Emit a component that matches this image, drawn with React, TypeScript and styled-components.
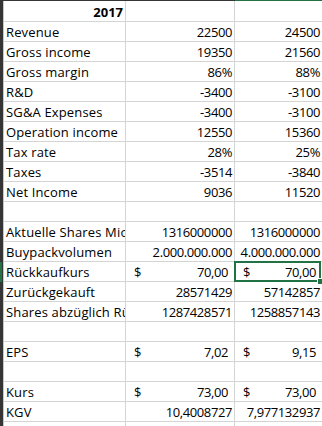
import React from 'react';
import styled, { createGlobalStyle } from 'styled-components';

const colors = {
  grid: '#d4d4d4',
  header: '#353535',
  headerEdge: '#c6c6c6',
  accent: '#217346',
  text: '#000000',
};

const GlobalStyle = createGlobalStyle`
  html, body {
    margin: 0;
    background: #ffffff;
    overflow: hidden;
  }
  body {
    font-family: "Open Sans", "Liberation Sans", sans-serif;
    font-size: 13px;
    color: ${colors.text};
  }
`;

const COLS = '4px 122px 109px 88px';

const Sheet = styled.div`
  width: 322px;
  height: 426px;
  overflow: hidden;
`;

const HeaderEdge = styled.div`
  display: grid;
  grid-template-columns: ${COLS};
  height: 1px;
`;

const EdgePart = styled.div<{ $active?: boolean }>`
  background: ${(p) => (p.$active ? colors.accent : colors.header)};
`;

const Row = styled.div<{ $tall?: boolean }>`
  display: grid;
  grid-template-columns: ${COLS};
  height: ${(p) => (p.$tall ? 21 : 20)}px;
`;

const RowHead = styled.div<{ $active?: boolean }>`
  box-sizing: border-box;
  background: ${(p) =>
    p.$active
      ? `linear-gradient(to right, ${colors.accent} 0 2px, ${colors.header} 2px)`
      : colors.header};
  border-right: 1px solid ${colors.headerEdge};
`;

const Cell = styled.div<{ $align?: 'left' | 'right'; $bold?: boolean; $selected?: boolean }>`
  position: relative;
  box-sizing: border-box;
  display: flex;
  align-items: flex-end;
  justify-content: ${(p) => (p.$align === 'right' ? 'flex-end' : 'flex-start')};
  padding: 0 2px 1px 2px;
  border-right: 1px solid ${colors.grid};
  border-bottom: 1px solid ${colors.grid};
  overflow: ${(p) => (p.$selected ? 'visible' : 'hidden')};
  white-space: nowrap;
  line-height: 16px;
  font-weight: ${(p) => (p.$bold ? 700 : 400)};
`;

const Label = styled.span`
  letter-spacing: 0.15px;
`;

const Num = styled.span`
  letter-spacing: -0.4px;
`;

const Money = styled.div`
  flex: 1;
  display: flex;
  justify-content: space-between;
  padding: 0 4px 0 6px;
  letter-spacing: -0.4px;
`;

const Selection = styled.div`
  position: absolute;
  left: -1px;
  top: -1px;
  right: 1px;
  bottom: -1px;
  border: 2px solid ${colors.accent};
  z-index: 1;

  &::after {
    content: '';
    position: absolute;
    right: -4px;
    bottom: -4px;
    width: 5px;
    height: 5px;
    background: ${colors.accent};
    box-shadow: 0 0 0 1px #ffffff;
  }
`;

type Value = string | { money: string };

type Line = {
  label: string;
  b?: Value;
  c?: Value;
};

const lines: Line[] = [
  { label: 'Revenue', b: '22500', c: '24500' },
  { label: 'Gross income', b: '19350', c: '21560' },
  { label: 'Gross margin', b: '86%', c: '88%' },
  { label: 'R&D', b: '-3400', c: '-3100' },
  { label: 'SG&A Expenses', b: '-3400', c: '-3100' },
  { label: 'Operation income', b: '12550', c: '15360' },
  { label: 'Tax rate', b: '28%', c: '25%' },
  { label: 'Taxes', b: '-3514', c: '-3840' },
  { label: 'Net Income', b: '9036', c: '11520' },
  { label: '' },
  { label: 'Aktuelle Shares Mio', b: '1316000000', c: '1316000000' },
  { label: 'Buypackvolumen', b: '2.000.000.000', c: '4.000.000.000' },
  { label: 'Rückkaufkurs', b: { money: '70,00' }, c: { money: '70,00' } },
  { label: 'Zurückgekauft', b: '28571429', c: '57142857' },
  { label: 'Shares abzüglich Rückkauf', b: '1287428571', c: '1258857143' },
  { label: '' },
  { label: 'EPS', b: { money: '7,02' }, c: { money: '9,15' } },
  { label: '' },
  { label: 'Kurs', b: { money: '73,00' }, c: { money: '73,00' } },
  { label: 'KGV', b: '10,4008727', c: '7,977132937' },
  { label: '' },
];

// the active cell sits in column C of the "Rückkaufkurs" row
const ACTIVE_ROW = 12;

const ValueCell = ({ value, selected }: { value?: Value; selected?: boolean }) => {
  if (value && typeof value === 'object') {
    return (
      <Cell $selected={selected}>
        <Money>
          <span>$</span>
          <span>{value.money}</span>
        </Money>
        {selected && <Selection />}
      </Cell>
    );
  }
  return (
    <Cell $align="right" $selected={selected}>
      {value && <Num>{value}</Num>}
      {selected && <Selection />}
    </Cell>
  );
};

const App = () => {
  return (
    <>
      <GlobalStyle />
      <Sheet>
        <HeaderEdge>
          <EdgePart />
          <EdgePart />
          <EdgePart />
          <EdgePart $active />
        </HeaderEdge>

        <Row $tall>
          <RowHead />
          <Cell $align="right" $bold>
            2017
          </Cell>
          <Cell />
          <Cell />
        </Row>

        {lines.map((line, i) => (
          <Row key={i}>
            <RowHead $active={i === ACTIVE_ROW} />
            <Cell>{line.label && <Label>{line.label}</Label>}</Cell>
            <ValueCell value={line.b} />
            <ValueCell value={line.c} selected={i === ACTIVE_ROW} />
          </Row>
        ))}
      </Sheet>
    </>
  );
};

export default App;
